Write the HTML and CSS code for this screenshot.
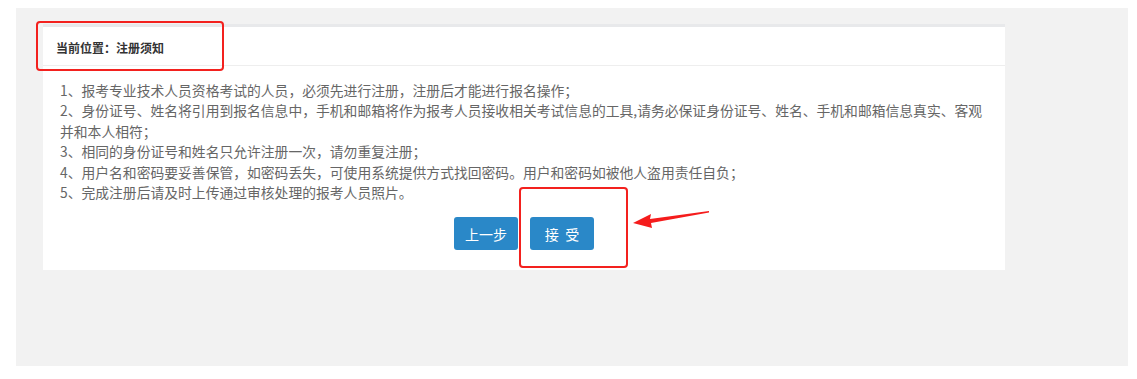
FILE: index.html
```html
<!DOCTYPE html>
<html lang="zh-CN">
<head>
<meta charset="utf-8">
<title>注册须知</title>
<link rel="stylesheet" href="styles.css">
</head>
<body>
<div class="page">
  <div class="card">
    <div class="card-head">当前位置：注册须知</div>
    <div class="card-body">
      <p class="notice">1、报考专业技术人员资格考试的人员，必须先进行注册，注册后才能进行报名操作；<br>2、身份证号、姓名将引用到报名信息中，手机和邮箱将作为报考人员接收相关考试信息的工具,请务必保证身份证号、姓名、手机和邮箱信息真实、客观并和本人相符；<br>3、相同的身份证号和姓名只允许注册一次，请勿重复注册；<br>4、用户名和密码要妥善保管，如密码丢失，可使用系统提供方式找回密码。用户和密码如被他人盗用责任自负；<br>5、完成注册后请及时上传通过审核处理的报考人员照片。</p>
      <div class="actions">
        <button class="btn">上一步</button>
        <button class="btn">接&nbsp;&nbsp;受</button>
      </div>
    </div>
  </div>
  <div class="mark mark-head"></div>
  <div class="mark mark-btn"></div>
  <svg class="arrow" width="90" height="24" viewBox="0 0 90 24">
    <path d="M2 14 L20 5 L19 10 L78 2 L78 3.5 L20 14 L21 19 Z" fill="#f51c1c"/>
  </svg>
</div>
</body>
</html>
```
FILE: styles.css
```css
html, body {
  margin: 0;
  padding: 0;
  background: #fff;
}
body {
  font-family: "Noto Sans CJK SC", "Liberation Sans", sans-serif;
}
.page {
  position: relative;
  margin: 8px 9px 13px 16px;
  height: 358px;
  background: #f2f2f2;
  padding: 16px 0 0 27px;
  box-sizing: border-box;
}
.card {
  width: 962px;
  background: #fff;
  border-top: 3px solid #e8e9eb;
}
.card-head {
  height: 35px;
  line-height: 35px;
  padding: 3px 0 0 13px;
  font-size: 12px;
  font-weight: bold;
  color: #333;
  border-bottom: 1px solid #eeeeee;
}
.card-body {
  padding: 14px 17px 20px 17px;
}
.notice {
  margin: 0;
  font-size: 13.8px;
  line-height: 20.4px;
  color: #666;
}
.actions {
  display: flex;
  justify-content: center;
  gap: 12px;
  margin-top: 15px;
}
.btn {
  width: 64px;
  height: 33px;
  border: none;
  border-radius: 3px;
  background: #2a88c8;
  color: #fff;
  font-family: inherit;
  font-size: 14px;
  padding: 0;
}
.mark {
  position: absolute;
  border: 2px solid #f3211e;
  border-radius: 4px;
  box-sizing: border-box;
}
.mark-head {
  left: 20px;
  top: 13px;
  width: 188px;
  height: 50px;
}
.mark-btn {
  left: 503px;
  top: 179px;
  width: 109px;
  height: 81px;
}
.arrow {
  position: absolute;
  left: 615px;
  top: 201px;
}
```
